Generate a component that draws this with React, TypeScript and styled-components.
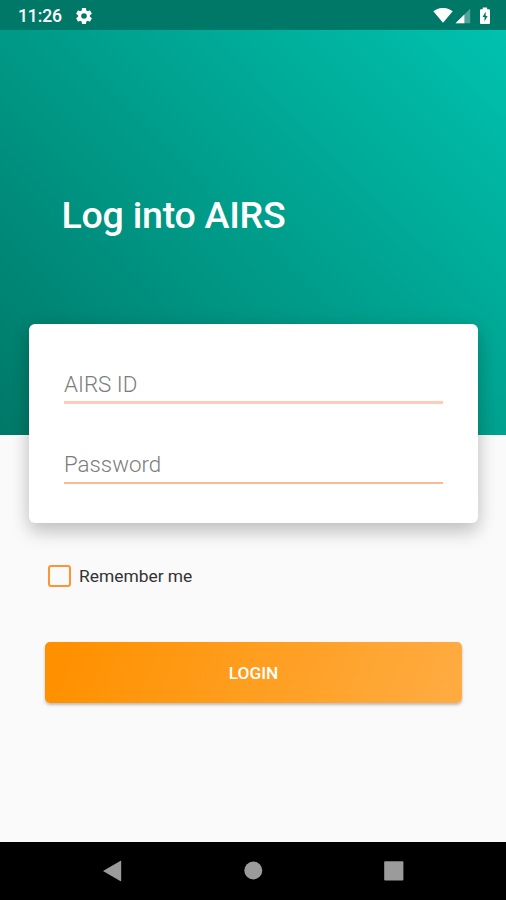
import React from "react";
import styled, { createGlobalStyle } from "styled-components";

const GlobalStyle = createGlobalStyle`
  * { box-sizing: border-box; }
  body { margin: 0; font-family: Roboto, sans-serif; background: #fafafa; }
`;

const Screen = styled.div`
  width: 506px;
  height: 900px;
  display: flex;
  flex-direction: column;
  overflow: hidden;
  background: #fafafa;
`;

const StatusBar = styled.header`
  height: 30px;
  flex: none;
  display: flex;
  align-items: center;
  padding: 1px 15px 0 18px;
  background: #007868;
  color: #fff;
`;

const Clock = styled.span`
  width: 58px;
  padding-top: 1px;
  font-size: 17.6px;
  line-height: 22px;
  font-weight: 500;
  letter-spacing: -0.15px;
`;

const StatusIcons = styled.div`
  display: flex;
  align-items: center;
  margin-left: auto;
`;

const Icon = styled.svg<{ $gap?: number }>`
  display: block;
  flex: none;
  margin-left: ${(p) => p.$gap ?? 0}px;
`;

const Hero = styled.section`
  height: 405px;
  flex: none;
  padding: 163px 0 0 61.5px;
  background: linear-gradient(45deg, #007868 0%, #009987 45%, #00c2af 100%);
`;

const Title = styled.h1`
  margin: 0;
  color: #fff;
  font-size: 37.6px;
  line-height: 44px;
  font-weight: 500;
  letter-spacing: -0.27px;
  white-space: nowrap;
`;

const Form = styled.form`
  flex: 1;
  display: flex;
  flex-direction: column;
  margin-top: -111px;
`;

const Card = styled.div`
  height: 199px;
  flex: none;
  margin: 0 28px 0 29px;
  padding: 42px 35px 0;
  display: flex;
  flex-direction: column;
  gap: 42px;
  border-radius: 6px;
  background: #fff;
  box-shadow: 0 10px 18px rgba(0, 0, 0, 0.18), 0 1px 20px rgba(0, 0, 0, 0.09);
`;

const Field = styled.input<{ $line: string; $thickness: number }>`
  height: 38px;
  width: 379px;
  padding: 0 0 ${(p) => 3 - p.$thickness}px;
  border: 0;
  border-bottom: ${(p) => p.$thickness}px solid ${(p) => p.$line};
  outline: 0;
  background: transparent;
  color: #333;
  font: 300 22.3px/30px Roboto, sans-serif;

  &::placeholder {
    color: #7c7c7c;
    opacity: 1;
  }
`;

const Remember = styled.label`
  display: flex;
  align-items: center;
  height: 24px;
  margin: 41px 0 0 48px;
  gap: 8px;
  color: #333;
  font-size: 17.4px;
  line-height: 24px;
`;

const Checkbox = styled.input`
  appearance: none;
  width: 23px;
  height: 22px;
  margin: 0 0 1px;
  border: 2px solid #ff9433;
  border-radius: 3px;
`;

const LoginButton = styled.button`
  height: 61px;
  margin: 54px 44px 0 45px;
  border: 0;
  border-radius: 5px;
  padding: 1px 0 0;
  background: linear-gradient(110deg, #ff9100 6%, #ffab40 96%);
  box-shadow: 0 2px 3px rgba(0, 0, 0, 0.25);
  color: #fff;
  font: 500 17.3px/22px Roboto, sans-serif;
`;

const NavBar = styled.nav`
  height: 58px;
  flex: none;
  display: flex;
  justify-content: space-between;
  align-items: center;
  padding: 0 102px;
  background: #000;
`;

export default function App() {
  return (
    <Screen>
      <GlobalStyle />
      <StatusBar>
        <Clock>11:26</Clock>
        <Icon width="16" height="16" viewBox="2 2 20 20" fill="#fff">
          <path d="M19.43 12.98c.04-.32.07-.64.07-.98s-.03-.66-.07-.98l2.11-1.65a.5.5 0 0 0 .12-.64l-2-3.46a.5.5 0 0 0-.61-.22l-2.49 1a7.3 7.3 0 0 0-1.69-.98l-.38-2.65A.49.49 0 0 0 14 2h-4a.49.49 0 0 0-.49.42l-.38 2.65c-.61.25-1.17.59-1.69.98l-2.49-1a.5.5 0 0 0-.61.22l-2 3.46a.5.5 0 0 0 .12.64l2.11 1.65a7.9 7.9 0 0 0 0 1.96l-2.11 1.65a.5.5 0 0 0-.12.64l2 3.46c.12.22.39.3.61.22l2.49-1c.52.4 1.08.73 1.69.98l.38 2.65c.03.24.24.42.49.42h4c.25 0 .46-.18.49-.42l.38-2.65a7.7 7.7 0 0 0 1.69-.98l2.49 1c.23.09.49 0 .61-.22l2-3.46a.5.5 0 0 0-.12-.64zM12 15.5a3.5 3.5 0 1 1 0-7 3.5 3.5 0 0 1 0 7z" />
        </Icon>
        <StatusIcons>
          <Icon width="20" height="16" viewBox="0 0 20 16" fill="#fff">
            <path d="M.3 3.2C5.9-1.1 14.1-1.1 19.7 3.2L10 14.8z" />
          </Icon>
          <Icon $gap={2} width="16" height="16" viewBox="0 0 16 16" fill="#fff">
            <path d="M15.2.8v14.4H.5z" opacity=".32" />
            <path d="M9.4 6.4v8.8H.5z" />
          </Icon>
          <Icon $gap={8} width="12" height="18" viewBox="0 0 12 18">
            <path d="M3.7.5h4.4v1.8h1.6c.7 0 1.3.5 1.3 1.2v12.2c0 .8-.6 1.3-1.3 1.3H2.2C1.5 17 1 16.5 1 15.7V3.5c0-.7.5-1.2 1.2-1.2h1.5z" fill="#fff" />
            <path d="M6.7 4.8 3.5 10.1h2v4.3L8.6 8.9H6.7z" fill="#007868" />
          </Icon>
        </StatusIcons>
      </StatusBar>
      <Hero>
        <Title>Log into AIRS</Title>
      </Hero>
      <Form>
        <Card>
          <Field placeholder="AIRS ID" aria-label="AIRS ID" $line="#fdcdb8" $thickness={3} />
          <Field type="password" placeholder="Password" aria-label="Password" $line="#fbb994" $thickness={2} />
        </Card>
        <Remember>
          <Checkbox type="checkbox" />
          Remember me
        </Remember>
        <LoginButton type="button">LOGIN</LoginButton>
      </Form>
      <NavBar>
        <Icon width="20" height="22" viewBox="0 0 20 22" fill="#9b9b9b">
          <path d="M1 11 18.2 1q1-.5 1 .6v18.8q0 1.1-1 .6z" />
        </Icon>
        <Icon width="20" height="20" viewBox="0 0 20 20" fill="#9b9b9b">
          <circle cx="10.3" cy="9.5" r="9" />
        </Icon>
        <Icon width="20" height="20" viewBox="0 0 20 20" fill="#9b9b9b">
          <rect x=".2" y=".2" width="19.2" height="19.2" rx="1" />
        </Icon>
      </NavBar>
    </Screen>
  );
}
